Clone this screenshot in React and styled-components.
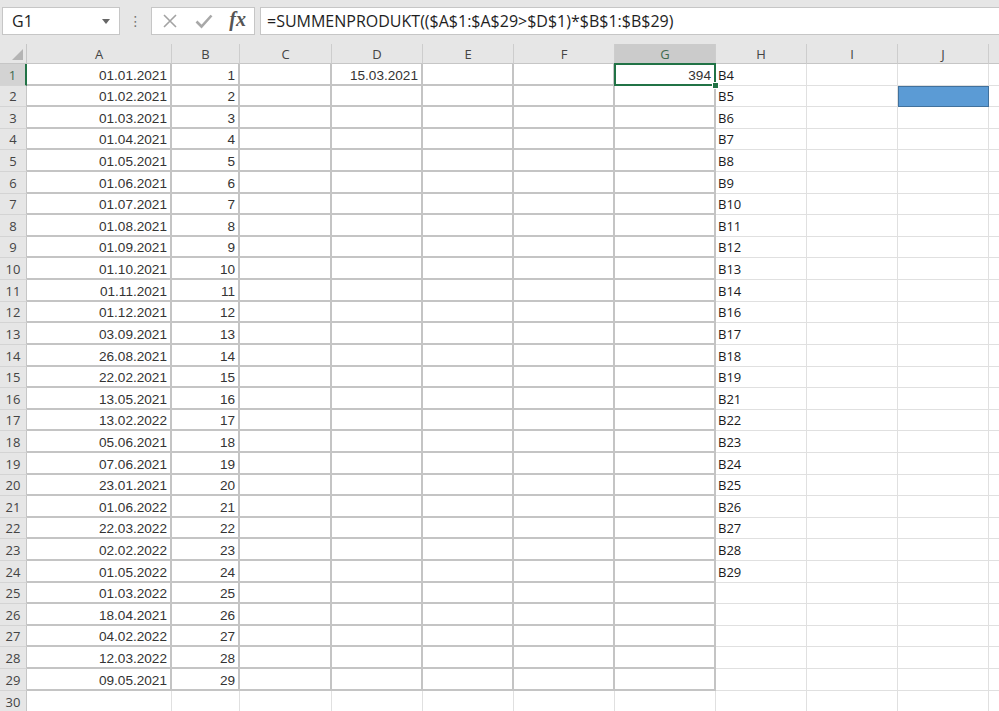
import React from 'react'
import styled, { createGlobalStyle } from 'styled-components'

const GlobalStyle = createGlobalStyle`
    body {
        margin: 0;
        background: #fff;
        overflow: hidden;
    }
`

const Page = styled.div`
    width: 999px;
    height: 711px;
    overflow: hidden;
    background: #fff;
`

const FormulaBar = styled.div`
    height: 44px;
    background: #e6e6e6;
    display: flex;
    align-items: center;
    padding: 0 0 2px 2px;
    box-sizing: border-box;
`

const Box = styled.div`
    height: 28px;
    box-sizing: border-box;
    background: #fff;
    border: 1px solid #c6c6c6;
    display: flex;
    align-items: center;
`

const NameBox = styled(Box)`
    width: 118px;
    justify-content: space-between;
    padding: 0 9px 0 9px;
    font-family: "Open Sans", sans-serif;
    font-size: 16px;
    color: #222;
`

const Grip = styled.div`
    width: 31px;
    text-align: center;
    color: #777;
    font-family: "DejaVu Sans", sans-serif;
    font-size: 14px;
`

const FxBox = styled(Box)`
    width: 104px;
    justify-content: space-between;
    padding: 0 8px 0 10px;
`

const FxLabel = styled.span`
    font-family: "Liberation Serif", serif;
    font-style: italic;
    font-weight: bold;
    font-size: 20px;
    color: #555;
    margin-top: -3px;
`

const FormulaInput = styled(Box)`
    flex: 1;
    margin-left: 5px;
    padding-left: 6px;
    border-right: none;
    font-family: "Open Sans", sans-serif;
    font-size: 16px;
    color: #1e1e1e;
    white-space: nowrap;
`

const Sheet = styled.div`
    display: grid;
    grid-template-columns: 27px 145px 68px 92px 91px 91px 101px 101px 91px 91px 91px 91px;
    grid-template-rows: 20px repeat(29, 21.62px) 22px;
`

const Corner = styled.div`
    position: relative;
    background: #e6e6e6;
    border-right: 1px solid #c6c6c6;
    border-bottom: 1px solid #c6c6c6;

    &::after {
        content: '';
        position: absolute;
        right: 3px;
        bottom: 3px;
        width: 11px;
        height: 11px;
        background: #b4b4b4;
        clip-path: polygon(100% 0, 100% 100%, 0 100%);
    }
`

const ColHead = styled.div`
    display: flex;
    align-items: center;
    justify-content: center;
    background: ${p => (p.$active ? '#cbcbcb' : '#e6e6e6')};
    color: ${p => (p.$active ? '#3f6b50' : '#444')};
    border-right: 1px solid #cdcdcd;
    border-bottom: 1px solid #c6c6c6;
    font-family: "Open Sans", sans-serif;
    font-size: 13px;
    padding-top: 1px;
`

const RowHead = styled.div`
    display: flex;
    align-items: flex-end;
    justify-content: center;
    padding-bottom: 1px;
    box-sizing: border-box;
    background: ${p => (p.$active ? '#d3d3d3' : '#e6e6e6')};
    color: ${p => (p.$active ? '#3f6b50' : '#444')};
    border-right: ${p => (p.$active ? '2px solid #217346' : '1px solid #c6c6c6')};
    border-bottom: 1px solid #d4d4d4;
    font-family: "Open Sans", sans-serif;
    font-size: 13px;
`

const Cell = styled.div`
    position: relative;
    display: flex;
    align-items: flex-end;
    justify-content: ${p => (p.$right ? 'flex-end' : 'flex-start')};
    padding: 0 3px 1px 2px;
    box-sizing: border-box;
    white-space: nowrap;
    font-family: ${p => (p.$label ? '"Open Sans"' : '"Liberation Sans"')}, sans-serif;
    font-size: ${p => (p.$label ? '13px' : '13.6px')};
    color: ${p => (p.$label ? '#1a1a1a' : '#333')};
    background: ${p => (p.$fill ? '#5b9bd5' : '#fff')};
    outline: ${p => (p.$fill ? '1px solid #41719c' : 'none')};
    outline-offset: -1px;
    border-right: ${p => (p.$table ? '2px solid #c4c4c4' : '1px solid #e0e0e0')};
    border-bottom: ${p => (p.$table ? '2px solid #c4c4c4' : '1px solid #e0e0e0')};
`

const Selection = styled.span`
    position: absolute;
    top: -1px;
    left: -1px;
    right: -2px;
    bottom: -2px;
    border: 2px solid #217346;
    z-index: 2;
    pointer-events: none;
`

const Handle = styled.span`
    position: absolute;
    right: -5px;
    bottom: -5px;
    width: 5px;
    height: 5px;
    background: #217346;
    border: 1px solid #fff;
`

// K only peeks in at the right edge, its letter stays off screen
const COLS = ['A', 'B', 'C', 'D', 'E', 'F', 'G', 'H', 'I', 'J', 'K']

const DATES = [
    '01.01.2021', '01.02.2021', '01.03.2021', '01.04.2021', '01.05.2021',
    '01.06.2021', '01.07.2021', '01.08.2021', '01.09.2021', '01.10.2021',
    '01.11.2021', '01.12.2021', '03.09.2021', '26.08.2021', '22.02.2021',
    '13.05.2021', '13.02.2022', '05.06.2021', '07.06.2021', '23.01.2021',
    '01.06.2022', '22.03.2022', '02.02.2022', '01.05.2022', '01.03.2022',
    '18.04.2021', '04.02.2022', '12.03.2022', '09.05.2021'
]

const LABELS = [
    'B4', 'B5', 'B6', 'B7', 'B8', 'B9', 'B10', 'B11', 'B12', 'B13', 'B14',
    'B16', 'B17', 'B18', 'B19', 'B21', 'B22', 'B23', 'B24', 'B25', 'B26',
    'B27', 'B28', 'B29'
]

const cellValue = (row, col) => {
    if (row > 29) return ''
    if (col === 'A') return DATES[row - 1]
    if (col === 'B') return String(row)
    if (col === 'D' && row === 1) return '15.03.2021'
    if (col === 'G' && row === 1) return '394'
    if (col === 'H') return LABELS[row - 1] || ''
    return ''
}

const CancelIcon = () => (
    <svg width="16" height="16" viewBox="0 0 16 16">
        <path d="M2 2 L14 14 M14 2 L2 14" stroke="#a3a3a3" strokeWidth="1.6" fill="none" />
    </svg>
)

const CheckIcon = () => (
    <svg width="18" height="16" viewBox="0 0 18 16">
        <path d="M1.5 8.5 L6.5 13.5 L16.5 2.5" stroke="#a8a8a8" strokeWidth="2.6" fill="none" />
    </svg>
)

const DropArrow = () => (
    <svg width="8" height="5" viewBox="0 0 8 5">
        <path d="M0 0 H8 L4 5 Z" fill="#666" />
    </svg>
)

const App = () => {
    const rows = []
    for (let r = 1; r <= 30; r++) {
        rows.push(
            <RowHead key={`h${r}`} $active={r === 1}>{r}</RowHead>
        )
        COLS.forEach((c, i) => {
            const table = i <= 6 && r <= 29
            const selected = c === 'G' && r === 1
            rows.push(
                <Cell
                    key={`${c}${r}`}
                    $table={table}
                    $right={c !== 'H'}
                    $label={c === 'H'}
                    $fill={c === 'J' && r === 2}
                >
                    {cellValue(r, c)}
                    {selected && (
                        <Selection>
                            <Handle />
                        </Selection>
                    )}
                </Cell>
            )
        })
    }

    return (
        <Page>
            <GlobalStyle />
            <FormulaBar>
                <NameBox>
                    <span>G1</span>
                    <DropArrow />
                </NameBox>
                <Grip>⋮</Grip>
                <FxBox>
                    <CancelIcon />
                    <CheckIcon />
                    <FxLabel>fx</FxLabel>
                </FxBox>
                <FormulaInput>=SUMMENPRODUKT(($A$1:$A$29&gt;$D$1)*$B$1:$B$29)</FormulaInput>
            </FormulaBar>
            <Sheet>
                <Corner />
                {COLS.map(c => (
                    <ColHead key={c} $active={c === 'G'}>{c === 'K' ? '' : c}</ColHead>
                ))}
                {rows}
            </Sheet>
        </Page>
    )
}

export default App
